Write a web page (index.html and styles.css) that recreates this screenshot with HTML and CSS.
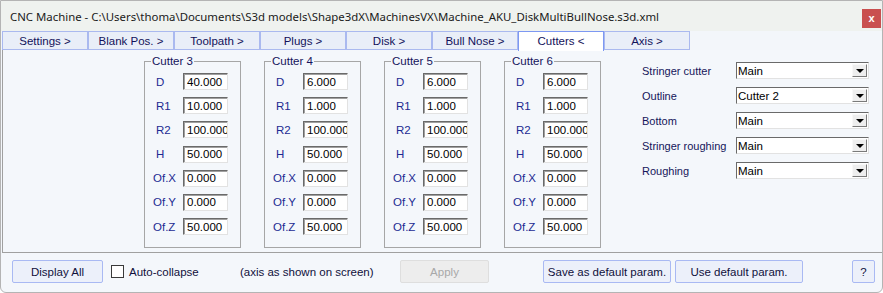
FILE: index.html
```html
<!DOCTYPE html>
<html>
<head>
<meta charset="UTF-8">
<title>CNC Machine</title>
<link rel="stylesheet" href="styles.css">
</head>
<body>
<div class="window">
	<div class="titlebar">
		<span class="title">CNC Machine - C:\Users\thoma\Documents\S3d models\Shape3dX\MachinesVX\Machine_AKU_DiskMultiBullNose.s3d.xml</span>
		<span class="close">x</span>
	</div>
	<div class="tabs">
		<div class="tab">Settings &gt;</div>
		<div class="tab">Blank Pos. &gt;</div>
		<div class="tab">Toolpath &gt;</div>
		<div class="tab">Plugs &gt;</div>
		<div class="tab">Disk &gt;</div>
		<div class="tab">Bull Nose &gt;</div>
		<div class="tab active">Cutters &lt;</div>
		<div class="tab">Axis &gt;</div>
	</div>
	<div class="panel">
		<fieldset class="group">
			<legend>Cutter 3</legend>
			<div class="row"><label class="short">D</label><input type="text" value="40.000"></div>
			<div class="row"><label class="short">R1</label><input type="text" value="10.000"></div>
			<div class="row"><label class="short">R2</label><input type="text" value="100.000"></div>
			<div class="row"><label class="short">H</label><input type="text" value="50.000"></div>
			<div class="row"><label>Of.X</label><input type="text" value="0.000"></div>
			<div class="row"><label>Of.Y</label><input type="text" value="0.000"></div>
			<div class="row"><label>Of.Z</label><input type="text" value="50.000"></div>
		</fieldset>
		<fieldset class="group">
			<legend>Cutter 4</legend>
			<div class="row"><label class="short">D</label><input type="text" value="6.000"></div>
			<div class="row"><label class="short">R1</label><input type="text" value="1.000"></div>
			<div class="row"><label class="short">R2</label><input type="text" value="100.000"></div>
			<div class="row"><label class="short">H</label><input type="text" value="50.000"></div>
			<div class="row"><label>Of.X</label><input type="text" value="0.000"></div>
			<div class="row"><label>Of.Y</label><input type="text" value="0.000"></div>
			<div class="row"><label>Of.Z</label><input type="text" value="50.000"></div>
		</fieldset>
		<fieldset class="group">
			<legend>Cutter 5</legend>
			<div class="row"><label class="short">D</label><input type="text" value="6.000"></div>
			<div class="row"><label class="short">R1</label><input type="text" value="1.000"></div>
			<div class="row"><label class="short">R2</label><input type="text" value="100.000"></div>
			<div class="row"><label class="short">H</label><input type="text" value="50.000"></div>
			<div class="row"><label>Of.X</label><input type="text" value="0.000"></div>
			<div class="row"><label>Of.Y</label><input type="text" value="0.000"></div>
			<div class="row"><label>Of.Z</label><input type="text" value="50.000"></div>
		</fieldset>
		<fieldset class="group">
			<legend>Cutter 6</legend>
			<div class="row"><label class="short">D</label><input type="text" value="6.000"></div>
			<div class="row"><label class="short">R1</label><input type="text" value="1.000"></div>
			<div class="row"><label class="short">R2</label><input type="text" value="100.000"></div>
			<div class="row"><label class="short">H</label><input type="text" value="50.000"></div>
			<div class="row"><label>Of.X</label><input type="text" value="0.000"></div>
			<div class="row"><label>Of.Y</label><input type="text" value="0.000"></div>
			<div class="row"><label>Of.Z</label><input type="text" value="50.000"></div>
		</fieldset>
		<div class="assign">
			<div class="arow"><span class="alabel">Stringer cutter</span><div class="combo"><span>Main</span><span class="drop"><svg width="8" height="4" viewBox="0 0 8 4"><path d="M0 0H8L4 4Z" fill="#000"/></svg></span></div></div>
			<div class="arow"><span class="alabel">Outline</span><div class="combo"><span>Cutter 2</span><span class="drop"><svg width="8" height="4" viewBox="0 0 8 4"><path d="M0 0H8L4 4Z" fill="#000"/></svg></span></div></div>
			<div class="arow"><span class="alabel">Bottom</span><div class="combo"><span>Main</span><span class="drop"><svg width="8" height="4" viewBox="0 0 8 4"><path d="M0 0H8L4 4Z" fill="#000"/></svg></span></div></div>
			<div class="arow"><span class="alabel">Stringer roughing</span><div class="combo"><span>Main</span><span class="drop"><svg width="8" height="4" viewBox="0 0 8 4"><path d="M0 0H8L4 4Z" fill="#000"/></svg></span></div></div>
			<div class="arow"><span class="alabel">Roughing</span><div class="combo"><span>Main</span><span class="drop"><svg width="8" height="4" viewBox="0 0 8 4"><path d="M0 0H8L4 4Z" fill="#000"/></svg></span></div></div>
		</div>
	</div>
	<div class="footer">
		<button class="btn display">Display All</button>
		<span class="check"></span>
		<span class="ftext collapse">Auto-collapse</span>
		<span class="ftext note">(axis as shown on screen)</span>
		<button class="btn apply" disabled>Apply</button>
		<button class="btn save">Save as default param.</button>
		<button class="btn use">Use default param.</button>
		<button class="btn help">?</button>
	</div>
</div>
</body>
</html>
```

FILE: styles.css
```css
html, body {
	margin : 0;
	padding : 0;
	background : #ffffff;
}
body {
	font-family : "Liberation Sans", Arial, sans-serif;
	font-size : 11px;
}
.window {
	width : 881px;
	height : 291px;
	border : 1px solid #b4b4b4;
	border-radius : 0 0 6px 6px;
	background : #f4f7fb;
	overflow : hidden;
}
.titlebar {
	height : 30px;
	background : #eff2ef;
	display : flex;
	align-items : center;
	padding-left : 9px;
}
.title {
	font-family : "Noto Sans", sans-serif;
	font-size : 11.4px;
	color : #1a1a1a;
	flex : 1;
	white-space : nowrap;
}
.close {
	width : 19px;
	height : 19px;
	margin-right : 1px;
	margin-top : 4px;
	background : #c94f4f;
	color : #fff;
	font-weight : bold;
	font-size : 11px;
	display : flex;
	align-items : center;
	justify-content : center;
}
.tabs {
	height : 19px;
	display : flex;
	padding-left : 1px;
	background : #f3f6fa;
}
.tab {
	width : 84px;
	height : 17px;
	border : 1px solid #aab9ef;
	background : #e9eef8;
	color : #12125a;
	font-size : 11.5px;
	text-align : center;
	line-height : 18px;
}
.tab.active {
	background : #ffffff;
	border-color : #7d98f2;
	border-bottom : none;
	height : 19px;
}
.panel {
	height : 202px;
	margin-left : 1px;
	border-left : 1px solid #a0a0a0;
	border-bottom : 1px solid #a0a0a0;
	display : flex;
	align-items : flex-start;
	padding-left : 141px;
}
.group {
	margin : 4px 23px 0 0;
	padding : 4px 0 11px 0;
	width : 95px;
	border : 1px solid #a6a6a6;
	display : flex;
	flex-direction : column;
	gap : 5.2px;
}
.group legend {
	margin-left : 6px;
	padding : 0 1px;
	color : #14145c;
	font-size : 11.5px;
	line-height : 14px;
}
.row {
	display : flex;
	align-items : center;
	height : 19px;
}
.row label {
	width : 30px;
	padding-left : 8px;
	color : #1c2a92;
	font-size : 11.5px;
}
.row label.short {
	padding-left : 11px;
	width : 27px;
}
.row input {
	width : 40px;
	height : 15px;
	margin : 0;
	padding : 0 0 0 3px;
	border : 1px solid;
	border-color : #6a6a6a #e2e2e2 #e2e2e2 #6a6a6a;
	box-shadow : inset 1px 1px 0 #a0a0a0;
	font-family : "Liberation Sans", Arial, sans-serif;
	font-size : 11.5px;
	color : #000;
	background : #fff;
	outline : none;
}
.assign {
	margin : 12px 0 0 18px;
	display : flex;
	flex-direction : column;
	gap : 8px;
}
.arow {
	display : flex;
	align-items : center;
	height : 17px;
}
.alabel {
	width : 94px;
	color : #15155a;
	font-size : 11px;
	white-space : nowrap;
}
.combo {
	width : 130px;
	height : 15px;
	border : 1px solid;
	border-color : #6a6a6a #e2e2e2 #e2e2e2 #6a6a6a;
	background : #fff;
	display : flex;
	align-items : center;
	justify-content : space-between;
	font-size : 11.5px;
	color : #000;
	padding-left : 1px;
}
.drop {
	width : 15px;
	height : 13px;
	margin-right : 1px;
	border : 1px solid;
	border-color : #f8f8f8 #7a7a7a #7a7a7a #f8f8f8;
	background : #eeeeee;
	display : flex;
	align-items : center;
	justify-content : center;
	box-sizing : border-box;
}
.footer {
	height : 37px;
	display : flex;
	align-items : center;
	padding-left : 11px;
	white-space : nowrap;
}
.footer > * {
	flex-shrink : 0;
}
.btn {
	height : 23px;
	margin : 0;
	padding : 0;
	border : 1px solid #a9b9f3;
	border-radius : 2px;
	background : #ecf0fa;
	color : #10103c;
	font-family : "Liberation Sans", Arial, sans-serif;
	font-size : 11.5px;
}
.display {
	width : 91px;
}
.check {
	width : 11px;
	height : 11px;
	border : 1px solid #3a3a3a;
	background : #fff;
	margin-left : 8px;
}
.ftext {
	color : #10103c;
	font-size : 11.5px;
}
.collapse {
	margin-left : 5px;
	width : 111px;
}
.note {
	width : 160px;
}
.apply {
	width : 89px;
	background : #ededed;
	border-color : #dedede;
	color : #a8a8a8;
}
.save {
	width : 128px;
	margin-left : 54px;
}
.use {
	width : 128px;
	margin-left : 4px;
}
.help {
	width : 23px;
	margin-left : 49px;
}
```
